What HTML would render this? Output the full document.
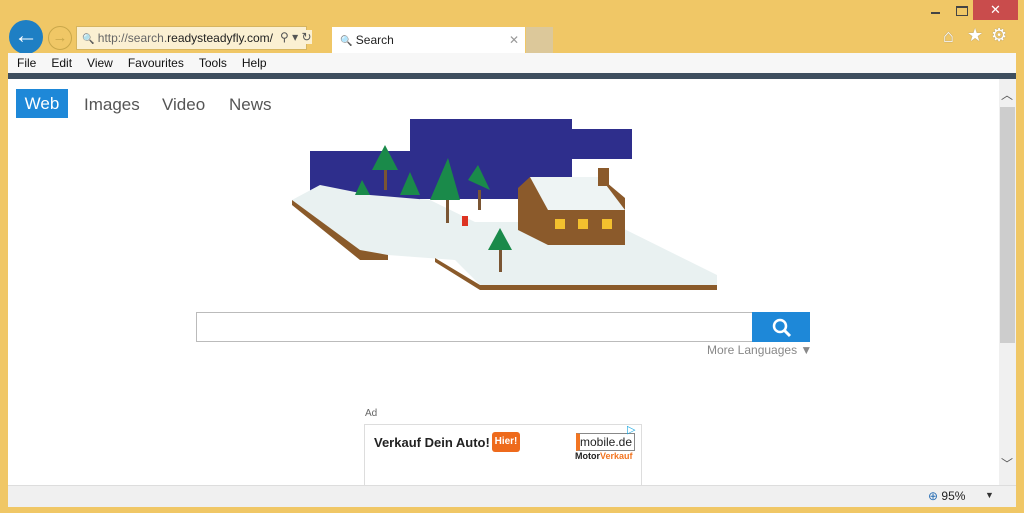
<!DOCTYPE html><html><head><style>
body{margin:0;width:1024px;height:513px;background:#f0c766;position:relative;overflow:hidden;font-family:"Liberation Sans",sans-serif}
.a{position:absolute}
</style></head><body>
<div class="a" style="left:931px;top:12px;width:9px;height:2px;background:#444"></div>
<div class="a" style="left:956px;top:6px;width:10px;height:7px;border:1px solid #444;border-top-width:2px"></div>
<div class="a" style="left:973px;top:0;width:45px;height:20px;background:#c94c4c;color:#fff;text-align:center;font-size:13px;line-height:20px">✕</div>
<div class="a" style="left:943px;top:26px;color:#fff;font-size:18px;text-shadow:0 0 1px #777">⌂</div>
<div class="a" style="left:967px;top:25px;color:#fff;font-size:18px;text-shadow:0 0 1px #777">★</div>
<div class="a" style="left:991px;top:25px;color:#fff;font-size:18px;text-shadow:0 0 1px #777">⚙</div>
<div class="a" style="left:9px;top:20px;width:34px;height:34px;border-radius:50%;background:#1e7fc4;color:#fff;font-size:24px;text-align:center;line-height:32px;font-weight:bold">←</div>
<div class="a" style="left:48px;top:26px;width:22px;height:22px;border-radius:50%;border:1px solid #c9a74a;color:#c9a74a;font-size:15px;text-align:center;line-height:22px">→</div>
<div class="a" style="left:76px;top:26px;width:229px;height:22px;background:#fbf0d2;border:1px solid #d6b560;font-size:12px;line-height:22px;color:#666;white-space:nowrap;overflow:hidden"><span style="margin-left:5px;font-size:10px">🔍</span> http://search.<span style="color:#222">readysteadyfly.com/</span></div>
<div class="a" style="left:280px;top:30px;font-size:12px;color:#555;background:#fbf0d2">⚲ ▾ ↻</div>
<div class="a" style="left:332px;top:27px;width:193px;height:26px;background:#fff;font-size:12px;line-height:26px;color:#222"><span style="margin-left:8px;color:#888;font-size:10px">🔍</span> Search<span style="position:absolute;right:6px;color:#999">✕</span></div>
<div class="a" style="left:526px;top:27px;width:27px;height:26px;background:#dcc89a"></div>
<div class="a" style="left:8px;top:53px;width:1008px;height:21px;background:#f7f7f7;font-size:12px;line-height:21px;color:#111">
<span style="margin-left:9px">File</span><span style="margin-left:15px">Edit</span><span style="margin-left:15px">View</span><span style="margin-left:15px">Favourites</span><span style="margin-left:15px">Tools</span><span style="margin-left:15px">Help</span></div>
<div class="a" style="left:8px;top:73px;width:1008px;height:6px;background:#3e4e5e"></div>
<div class="a" style="left:8px;top:79px;width:991px;height:406px;background:#fff"></div>
<div class="a" style="left:999px;top:79px;width:17px;height:406px;background:#f0f0f0"></div>
<div class="a" style="left:1000px;top:107px;width:15px;height:236px;background:#cdcdcd"></div>
<div class="a" style="left:1001px;top:86px;font-size:12px;color:#555">︿</div>
<div class="a" style="left:1001px;top:455px;font-size:12px;color:#555">﹀</div>
<div class="a" style="left:16px;top:89px;width:52px;height:29px;background:#1e88d8;color:#fff;font-size:17px;line-height:29px;text-align:center">Web</div>
<div class="a" style="left:84px;top:95px;font-size:17px;color:#555">Images</div>
<div class="a" style="left:162px;top:95px;font-size:17px;color:#555">Video</div>
<div class="a" style="left:229px;top:95px;font-size:17px;color:#555">News</div>
<svg class="a" style="left:280px;top:110px" width="450" height="190">
<rect x="130" y="9" width="162" height="80" fill="#2e2e8c"/>
<rect x="30" y="41" width="110" height="50" fill="#2e2e8c"/>
<rect x="292" y="19" width="60" height="30" fill="#2e2e8c"/>
<polygon points="12,90 40,75 90,85 150,90 195,112 330,112 437,165 437,175 200,175 175,150 108,145 80,147" fill="#e9f1f1"/>
<polygon points="12,95 80,150 108,150 108,145 80,140 12,90" fill="#8a5a2a"/>
<polygon points="155,148 200,175 437,175 437,180 200,180 155,152" fill="#8a5a2a"/>
<polygon points="238,78 250,67 320,67 345,88 345,135 268,135 238,120" fill="#8b5a2b"/>
<polygon points="250,67 320,67 345,100 268,100" fill="#eef4f4"/>
<rect x="318" y="58" width="11" height="18" fill="#8b5a2b"/>
<rect x="275" y="109" width="10" height="10" fill="#f3c02e"/><rect x="298" y="109" width="10" height="10" fill="#f3c02e"/><rect x="322" y="109" width="10" height="10" fill="#f3c02e"/>
<g fill="#1a8a4a"><polygon points="92,60 105,35 118,60"/><polygon points="150,90 168,48 180,90"/><polygon points="188,70 198,55 210,80"/><polygon points="120,85 130,62 140,85"/><polygon points="75,85 82,70 90,85"/><polygon points="208,140 220,118 232,140"/></g>
<g fill="#7a5533"><rect x="104" y="60" width="3" height="20"/><rect x="166" y="90" width="3" height="23"/><rect x="198" y="80" width="3" height="20"/><rect x="219" y="140" width="3" height="22"/></g>
<rect x="182" y="106" width="6" height="10" fill="#d32"/>
</svg>
<div class="a" style="left:196px;top:312px;width:556px;height:28px;border:1px solid #bbb"></div>
<div class="a" style="left:752px;top:312px;width:58px;height:30px;background:#1e88d8"></div>
<svg class="a" style="left:771px;top:317px" width="22" height="22"><circle cx="9" cy="9" r="6" stroke="#fff" stroke-width="2.5" fill="none"/><line x1="13" y1="13" x2="19" y2="19" stroke="#fff" stroke-width="3"/></svg>
<div class="a" style="left:707px;top:343px;font-size:12px;color:#888">More Languages ▼</div>
<div class="a" style="left:365px;top:408px;font-size:10px;color:#666">Ad</div>
<div class="a" style="left:364px;top:424px;width:276px;height:61px;border:1px solid #ddd;border-bottom:none"></div>
<div class="a" style="left:374px;top:435px;font-size:13px;font-weight:bold;color:#222">Verkauf Dein Auto!</div>
<div class="a" style="left:492px;top:432px;width:28px;height:20px;background:#ee6a1c;border-radius:3px;color:#fff;font-size:10px;font-weight:bold;line-height:20px;text-align:center">Hier!</div>
<div class="a" style="left:576px;top:433px;width:54px;height:16px;border:1px solid #888;border-left:4px solid #f27522;font-size:12px;line-height:16px;color:#222">mobile.de</div>
<div class="a" style="left:575px;top:451px;font-size:9px;font-weight:bold;color:#222">Motor<span style="color:#f27522">Verkauf</span></div>
<div class="a" style="left:627px;top:423px;color:#1aa7e0;font-size:11px">▷</div>
<div class="a" style="left:8px;top:485px;width:1008px;height:21px;background:#f0f0f0;border-top:1px solid #ddd"></div>
<div class="a" style="left:928px;top:489px;font-size:12px;color:#222"><span style="color:#2a6fb5">⊕</span> 95%</div>
<div class="a" style="left:985px;top:490px;font-size:9px;color:#333">▼</div>
</body></html>
